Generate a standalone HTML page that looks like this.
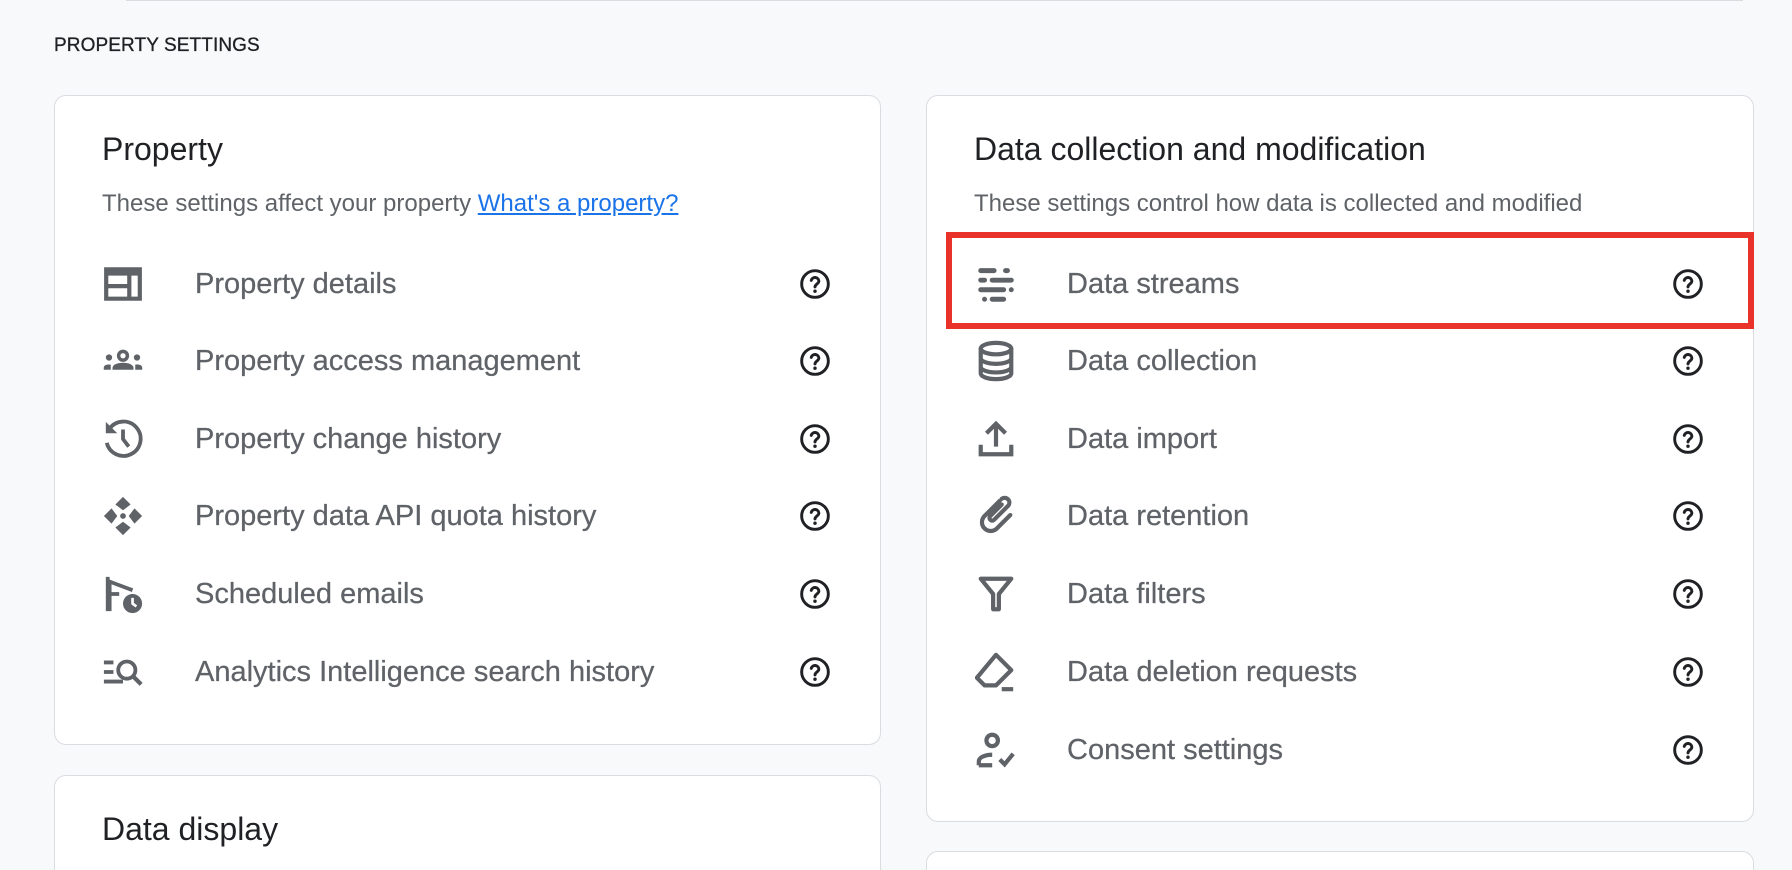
<!DOCTYPE html>
<html><head><meta charset="utf-8"><style>
*{margin:0;padding:0;box-sizing:border-box}
html,body{width:1792px;height:870px;overflow:hidden}
body{background:#f8f9fa;font-family:"Liberation Sans",Arial,sans-serif;position:relative}
.topline{position:absolute;left:126px;top:0;width:1617px;height:1px;background:#dadce0}
.h{position:absolute;left:54px;top:35px;font-size:19px;color:#202124;letter-spacing:.1px;-webkit-text-stroke:.3px #202124}
.card{position:absolute;background:#fff;border:1px solid #dadce0;border-radius:12px}
.t{position:absolute;font-size:32px;color:#202124}
.s{position:absolute;font-size:24px;color:#5f6368}
.s a{color:#1a73e8;text-decoration:underline}
.row{position:absolute;height:40px;display:flex;align-items:center}
.row svg.i{width:42px;height:42px;fill:#5f6368;flex:none}
.row span{position:absolute;font-size:29px;color:#5f6368;white-space:nowrap;-webkit-text-stroke:.25px #5f6368}
.q{position:absolute;width:32px;height:32px}
.red{position:absolute;left:946px;top:232px;width:808px;height:97px;border:6px solid #e8322a}
</style></head><body>
<div class="topline"></div>
<div class="h">PROPERTY SETTINGS</div>

<div class="card" style="left:54px;top:95px;width:827px;height:650px"></div>
<div class="card" style="left:54px;top:775px;width:827px;height:120px"></div>
<div class="card" style="left:926px;top:95px;width:828px;height:727px"></div>
<div class="card" style="left:926px;top:851px;width:828px;height:40px"></div>

<div class="t" style="left:102px;top:131px">Property</div>
<div class="s" style="left:102px;top:190px">These settings affect your property <a>What's a property?</a></div>
<div class="t" style="left:102px;top:811px">Data display</div>

<div class="t" style="left:974px;top:131px">Data collection and modification</div>
<div class="s" style="left:974px;top:190px">These settings control how data is collected and modified</div>

<svg width="0" height="0" style="position:absolute"><defs>
<symbol id="q" viewBox="0 0 24 24"><circle cx="12" cy="12" r="10" fill="none" stroke="#202124" stroke-width="2.2"/><path d="M9.2 9.3a2.9 2.9 0 0 1 5.7.5c0 2-2.9 2.4-2.9 4.4" fill="none" stroke="#202124" stroke-width="2.2" stroke-linecap="round"/><circle cx="12" cy="17.4" r="1.3" fill="#202124"/></symbol>
</defs></svg>

<!-- left rows -->
<div class="row" style="left:102px;top:264px"><svg class="i" viewBox="2 2 20 20"><path d="M3 4h18v16H3zM5 8v4h9V8zm11 0v10h3V8zM5 14v4h9v-4z" fill-rule="evenodd"/></svg><span style="left:93px">Property details</span></div>
<div class="row" style="left:102px;top:341px"><svg class="i" viewBox="0 1 24 22"><circle cx="12" cy="9" r="2.5" fill="none" stroke="#5f6368" stroke-width="2"/><path d="M6 17v-1c0-2 3-3 6-3s6 1 6 3v1z"/><circle cx="4" cy="10" r="1.8"/><circle cx="20" cy="10" r="1.8"/><path d="M1 17v-1c0-1.3 1-2 3-2 .7 0 1 .1 1 .1V17zM23 17v-1c0-1.3-1-2-3-2-.7 0-1 .1-1 .1V17z"/></svg><span style="left:93px">Property access management</span></div>
<div class="row" style="left:102px;top:419px"><svg class="i" viewBox="1 1 22 22"><path d="M5 6.5A9 9 0 1 1 3.5 14" fill="none" stroke="#5f6368" stroke-width="2"/><path d="M3 3v6h6z"/><path d="M12 7v5l3 4" fill="none" stroke="#5f6368" stroke-width="2"/></svg><span style="left:93px">Property change history</span></div>
<div class="row" style="left:102px;top:496px"><svg class="i" viewBox="1 1 22 22"><path d="M12 2l4 4-4 3-4-3zM12 22l4-4-4-3-4 3zM2 12l4-4 3 4-3 4zM22 12l-4-4-3 4 3 4z"/><circle cx="12" cy="12" r="1.5"/></svg><span style="left:93px">Property data API quota history</span></div>
<div class="row" style="left:102px;top:574px"><svg class="i" viewBox="1 1 22 22"><path d="M4 3v17l1 0V5.5L17 10" fill="none" stroke="#5f6368" stroke-width="2"/><path d="M5 12h5" stroke="#5f6368" stroke-width="2"/><circle cx="17" cy="17" r="5"/><path d="M17 14v3l2 1.5" fill="none" stroke="#fff" stroke-width="1.4"/></svg><span style="left:93px">Scheduled emails</span></div>
<div class="row" style="left:102px;top:652px"><svg class="i" viewBox="1 1 22 22"><path d="M2 7h5M2 12h5M2 17h10" stroke="#5f6368" stroke-width="2"/><circle cx="14" cy="11" r="4.5" fill="none" stroke="#5f6368" stroke-width="2"/><path d="M17.5 14.5l4 4" stroke="#5f6368" stroke-width="2.2"/></svg><span style="left:93px">Analytics Intelligence search history</span></div>

<!-- right rows -->
<div class="row" style="left:975px;top:264px"><svg class="i" viewBox="1 1 22 22"><g stroke="#5f6368" stroke-width="2.6" stroke-linecap="round"><path d="M4 5h7M17 5h1M4 10h2M10 10h10M4 15h12M20 15h0M6 20h0M10 20h6"/></g></svg><span style="left:92px">Data streams</span></div>
<div class="row" style="left:975px;top:341px"><svg class="i" viewBox="1 1 22 22"><g fill="none" stroke="#5f6368" stroke-width="2.2"><ellipse cx="12" cy="5.5" rx="8" ry="3"/><path d="M4 5.5v13c0 1.7 3.6 3 8 3s8-1.3 8-3v-13M4 10.5c0 1.7 3.6 3 8 3s8-1.3 8-3M4 15c0 1.7 3.6 3 8 3s8-1.3 8-3"/></g></svg><span style="left:92px">Data collection</span></div>
<div class="row" style="left:975px;top:419px"><svg class="i" viewBox="1 1 22 22"><g fill="none" stroke="#5f6368" stroke-width="2.2"><path d="M12 16V4M7 9l5-5 5 5M4 15v5h16v-5"/></g></svg><span style="left:92px">Data import</span></div>
<div class="row" style="left:975px;top:496px"><svg class="i" viewBox="1 1 22 22"><g fill="none" stroke="#5f6368" stroke-width="2.2" stroke-linecap="round"><path d="M14 4l-8 8a4.5 4.5 0 0 0 6.5 6.5l7-7M15 3a2.5 2.5 0 0 1 3.5 3.5l-7.5 7.5a1 1 0 0 1-2-2l6-6"/></g></svg><span style="left:92px">Data retention</span></div>
<div class="row" style="left:975px;top:574px"><svg class="i" viewBox="1 1 22 22"><path d="M4 4h16l-6.5 8v8h-3v-8z" fill="none" stroke="#5f6368" stroke-width="2.2" stroke-linejoin="round"/></svg><span style="left:92px">Data filters</span></div>
<div class="row" style="left:975px;top:652px"><svg class="i" viewBox="1 1 22 22"><g fill="none" stroke="#5f6368" stroke-width="2.2" stroke-linejoin="round"><path d="M12 3l8 8-8 8H6l-4-4z"/><path d="M15 21h6"/></g></svg><span style="left:92px">Data deletion requests</span></div>
<div class="row" style="left:975px;top:730px"><svg class="i" viewBox="1 1 22 22"><g fill="none" stroke="#5f6368" stroke-width="2.2"><circle cx="10" cy="7" r="3"/><path d="M3 20v-2c0-2 3-3.5 7-3.5M3 20h7M14 17l2.5 2.5L21 14"/></g></svg><span style="left:92px">Consent settings</span></div>

<!-- help icons -->
<svg class="q" style="left:799px;top:268px"><use href="#q"/></svg>
<svg class="q" style="left:799px;top:345px"><use href="#q"/></svg>
<svg class="q" style="left:799px;top:423px"><use href="#q"/></svg>
<svg class="q" style="left:799px;top:500px"><use href="#q"/></svg>
<svg class="q" style="left:799px;top:578px"><use href="#q"/></svg>
<svg class="q" style="left:799px;top:656px"><use href="#q"/></svg>
<svg class="q" style="left:1672px;top:268px"><use href="#q"/></svg>
<svg class="q" style="left:1672px;top:345px"><use href="#q"/></svg>
<svg class="q" style="left:1672px;top:423px"><use href="#q"/></svg>
<svg class="q" style="left:1672px;top:500px"><use href="#q"/></svg>
<svg class="q" style="left:1672px;top:578px"><use href="#q"/></svg>
<svg class="q" style="left:1672px;top:656px"><use href="#q"/></svg>
<svg class="q" style="left:1672px;top:734px"><use href="#q"/></svg>

<div class="red"></div>
</body></html>
